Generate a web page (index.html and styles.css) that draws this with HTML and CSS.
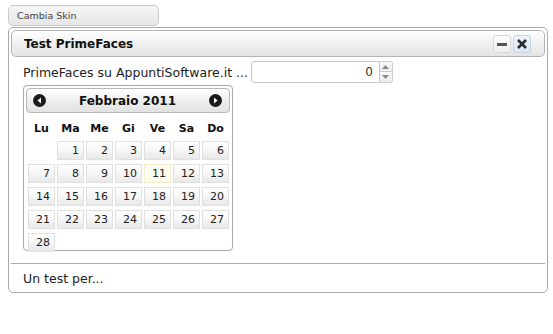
FILE: index.html
```html
<!DOCTYPE html>
<html>
	<head>
		<meta charset="utf-8">
		<title>Test PrimeFaces</title>
		<link rel="stylesheet" href="styles.css">
	</head>
	<body>
		<div class="skin-btn">Cambia Skin</div>
		<div class="panel">
			<div class="panel-header">
				<span class="panel-title">Test PrimeFaces</span>
				<span class="panel-tools">
					<a class="tool" href="javascript:void(0);">
						<svg width="12" height="12" viewBox="0 0 12 12"><rect x="1" y="5" width="10" height="3" fill="#555"/></svg>
					</a>
					<a class="tool tool-hover" href="javascript:void(0);">
						<svg width="12" height="12" viewBox="0 0 12 12"><path d="M2 2 L10 10 M10 2 L2 10" stroke="#2b2b2b" stroke-width="2.6"/></svg>
					</a>
				</span>
			</div>
			<div class="panel-content">
				<div class="row">
					<span class="label">PrimeFaces su AppuntiSoftware.it ...</span>
					<span class="spinner">
						<input class="spinner-input" type="text" value="0">
						<span class="spinner-btns">
							<span class="spin-btn"><svg width="7" height="4" viewBox="0 0 7 4"><path d="M0 4 L3.5 0 L7 4 Z" fill="#888"/></svg></span>
							<span class="spin-btn"><svg width="7" height="4" viewBox="0 0 7 4"><path d="M0 0 L3.5 4 L7 0 Z" fill="#888"/></svg></span>
						</span>
					</span>
				</div>
				<div class="calendar">
					<div class="cal-header">
						<a class="cal-nav" href="javascript:void(0);">
							<svg width="13" height="13" viewBox="0 0 13 13"><circle cx="6.5" cy="6.5" r="6.5" fill="#1a1a1a"/><path d="M8 3.5 L4.5 6.5 L8 9.5 Z" fill="#fff"/></svg>
						</a>
						<span class="cal-title">Febbraio 2011</span>
						<a class="cal-nav" href="javascript:void(0);">
							<svg width="13" height="13" viewBox="0 0 13 13"><circle cx="6.5" cy="6.5" r="6.5" fill="#1a1a1a"/><path d="M5 3.5 L8.5 6.5 L5 9.5 Z" fill="#fff"/></svg>
						</a>
					</div>
					<table class="cal-days">
						<thead>
							<tr><th>Lu</th><th>Ma</th><th>Me</th><th>Gi</th><th>Ve</th><th>Sa</th><th>Do</th></tr>
						</thead>
						<tbody>
							<tr><td></td><td><a>1</a></td><td><a>2</a></td><td><a>3</a></td><td><a>4</a></td><td><a>5</a></td><td><a>6</a></td></tr>
							<tr><td><a>7</a></td><td><a>8</a></td><td><a>9</a></td><td><a>10</a></td><td><a class="today">11</a></td><td><a>12</a></td><td><a>13</a></td></tr>
							<tr><td><a>14</a></td><td><a>15</a></td><td><a>16</a></td><td><a>17</a></td><td><a>18</a></td><td><a>19</a></td><td><a>20</a></td></tr>
							<tr><td><a>21</a></td><td><a>22</a></td><td><a>23</a></td><td><a>24</a></td><td><a>25</a></td><td><a>26</a></td><td><a>27</a></td></tr>
							<tr><td><a>28</a></td><td></td><td></td><td></td><td></td><td></td><td></td></tr>
						</tbody>
					</table>
				</div>
			</div>
			<div class="panel-footer">Un test per...</div>
		</div>
	</body>
</html>
```

FILE: styles.css
```css
body{
	margin: 0;
	padding: 5px 0 0 8px;
	font-family: "DejaVu Sans", Verdana, sans-serif;
	color: #222;
	background-color: #fff;
}
.skin-btn{
	box-sizing: border-box;
	width: 151px;
	height: 21px;
	padding: 4px 0 0 8px;
	font-size: 9.5px;
	color: #444;
	border: 1px solid #c9c9c9;
	border-radius: 5px;
	background: linear-gradient(#f6f6f6, #e6e6e6);
}
.panel{
	box-sizing: border-box;
	width: 540px;
	height: 266px;
	margin-top: 1px;
	padding: 2px;
	border: 1px solid #aaa;
	border-radius: 5px;
}
.panel-header{
	box-sizing: border-box;
	height: 27px;
	display: flex;
	align-items: center;
	justify-content: space-between;
	padding: 0 13px 0 12px;
	border: 1px solid #b4b4b4;
	border-radius: 5px;
	background: linear-gradient(#ffffff, #f1f1f1 50%, #e4e4e4);
}
.panel-title{
	font-size: 12px;
	font-weight: bold;
	color: #111;
}
.panel-tools{
	display: flex;
	gap: 2px;
}
.tool{
	box-sizing: border-box;
	width: 18px;
	height: 18px;
	display: flex;
	align-items: center;
	justify-content: center;
	border: 1px solid #d8d8d8;
	border-radius: 3px;
	background: linear-gradient(#fdfdfd, #efefef);
}
.tool-hover{
	border-color: #c4d4e4;
	background: linear-gradient(#eef5fc, #dde9f5);
}
.panel-content{
	box-sizing: border-box;
	height: 207px;
	padding: 4px 12px 0;
	border-bottom: 1px solid #aaa;
}
.row{
	display: flex;
	align-items: center;
	height: 22px;
}
.label{
	font-size: 12.5px;
	margin-right: 3px;
}
.spinner{
	display: flex;
	height: 22px;
}
.spinner-input{
	box-sizing: border-box;
	width: 129px;
	height: 22px;
	margin: 0;
	padding: 0 6px 0 0;
	text-align: right;
	font-family: "DejaVu Sans", Verdana, sans-serif;
	font-size: 12px;
	color: #333;
	border: 1px solid #c6c6c6;
	border-radius: 3px 0 0 3px;
}
.spinner-btns{
	display: flex;
	flex-direction: column;
	width: 13px;
}
.spin-btn{
	box-sizing: border-box;
	height: 11px;
	display: flex;
	align-items: center;
	justify-content: center;
	border: 1px solid #cfcfcf;
	border-left: none;
	background: linear-gradient(#fafafa, #ececec);
}
.spin-btn:first-child{
	border-radius: 0 3px 0 0;
}
.spin-btn:last-child{
	border-top: none;
	border-radius: 0 0 3px 0;
}
.calendar{
	box-sizing: border-box;
	width: 210px;
	height: 166px;
	margin-top: 2px;
	padding: 2px;
	border: 1px solid #aaa;
	border-radius: 4px;
}
.cal-header{
	box-sizing: border-box;
	height: 25px;
	display: flex;
	align-items: center;
	justify-content: space-between;
	padding: 0 7px 0 6px;
	border: 1px solid #b8b8b8;
	border-radius: 4px;
	background: linear-gradient(#ffffff, #efefef 50%, #e2e2e2);
}
.cal-nav{
	display: flex;
}
.cal-title{
	font-size: 12px;
	font-weight: bold;
	color: #111;
}
.cal-days{
	width: 203px;
	margin: 4px 0 0 1px;
	border-collapse: collapse;
	table-layout: fixed;
	font-size: 11px;
}
.cal-days th{
	height: 22px;
	padding: 0;
	font-weight: bold;
	text-align: center;
	color: #111;
}
.cal-days td{
	height: 21px;
	padding: 1px;
}
.cal-days a{
	box-sizing: border-box;
	display: block;
	height: 19px;
	padding: 2px 4px 0 0;
	text-align: right;
	color: #222;
	border: 1px solid #e0e0e0;
	background: linear-gradient(#ffffff, #f6f6f6 50%, #e8e8e8);
}
.cal-days a.today{
	border-color: #f4efc8;
	background: #fdfcf0;
}
.panel-footer{
	padding: 7px 12px 0;
	font-size: 12.5px;
}
```
